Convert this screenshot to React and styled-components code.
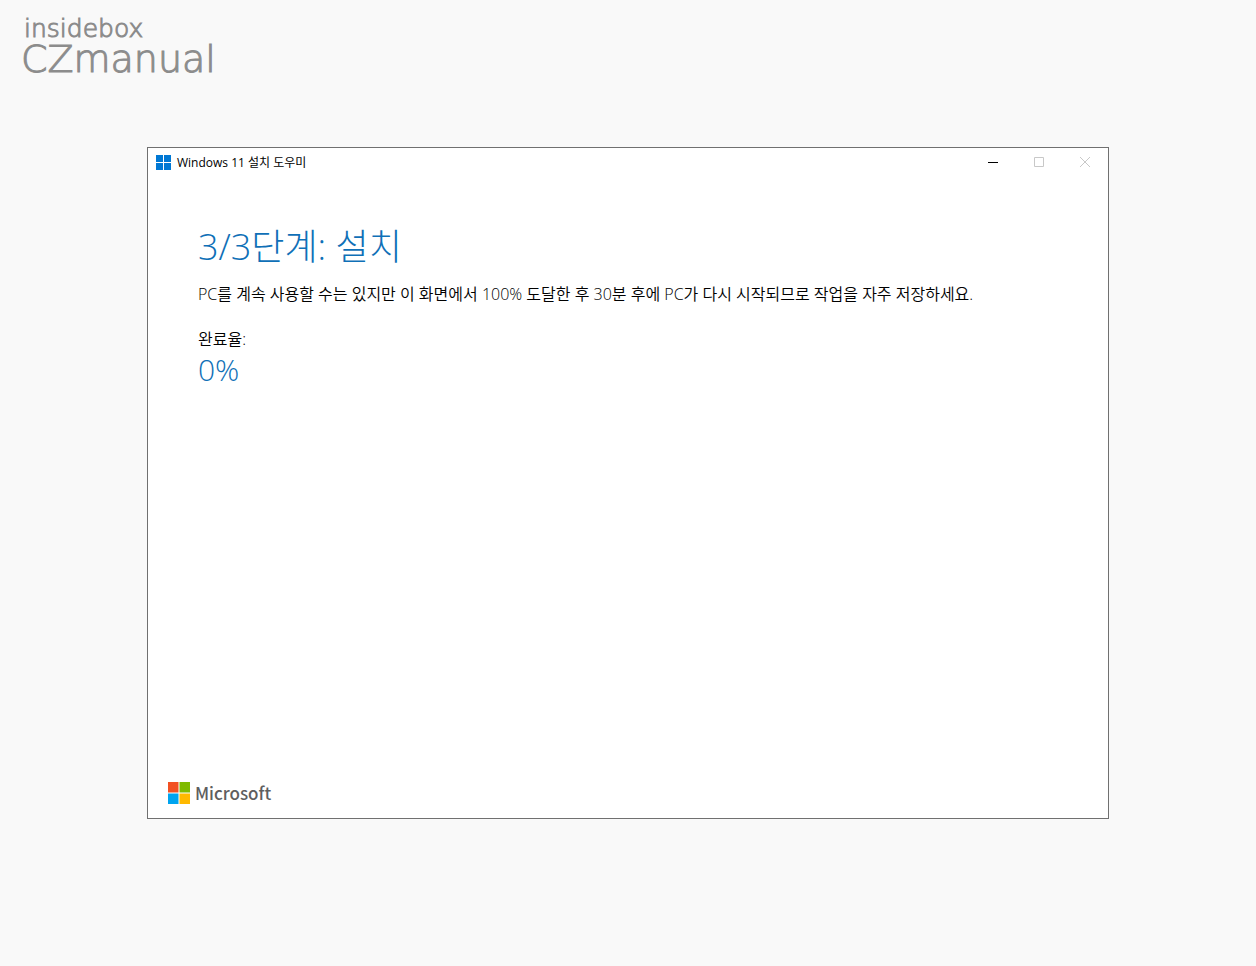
import React from "react";
import styled, { createGlobalStyle } from "styled-components";

const GlobalStyle = createGlobalStyle`
  * { box-sizing: border-box; }
  body {
    margin: 0;
    background: #f9f9f9;
    color: #000;
    font-family: "Open Sans", "Noto Sans CJK KR", sans-serif;
  }
`;

const Page = styled.div`
  min-height: 100vh;
  padding: 16px 24px 48px;
`;

const Brand = styled.header`
  display: flex;
  flex-direction: column;
  height: 64px;
  color: #8c8c8c;
  font-family: "DejaVu Sans", sans-serif;
  font-weight: 200;
  -webkit-text-stroke: 1px #8c8c8c;
`;

const BrandTop = styled.span`
  font-size: 25px;
  line-height: 25px;
`;

const BrandName = styled.span`
  font-size: 38px;
  line-height: 36px;
  margin-left: -3px;
`;

const Window = styled.main`
  display: flex;
  flex-direction: column;
  max-width: 962px;
  min-height: 672px;
  margin: 67px auto 0;
  background: #fff;
  border: 1px solid #707070;
`;

const TitleBar = styled.div`
  display: flex;
  align-items: center;
  height: 29px;
  padding-left: 8px;
`;

const Title = styled.span`
  flex: 1;
  margin-left: 6px;
  font-size: 12px;
  line-height: 17px;
`;

const WindowButton = styled.button`
  display: flex;
  align-items: center;
  justify-content: center;
  width: 46px;
  height: 28px;
  padding: 0 0 1px;
  border: 0;
  background: transparent;
  color: ${(p) => (p.disabled ? "#c8c8c8" : "#000")};
`;

const Content = styled.section`
  flex: 1;
  padding: 46px 50px 24px;
`;

const Heading = styled.h1`
  margin: 0;
  color: #0f70b7;
  font-size: 36px;
  font-weight: 300;
  line-height: 48px;
`;

const Text = styled.p`
  display: block;
  margin: 0;
  padding-top: ${(p) => p.$space};
  font-size: 16px;
  font-weight: 350;
  line-height: 24px;
`;

const Percent = styled.output`
  display: block;
  color: #0f70b7;
  font-size: 30px;
  font-weight: 300;
  line-height: 38px;
`;

const Footer = styled.footer`
  display: flex;
  align-items: center;
  gap: 5px;
  padding: 0 20px 13px;
`;

const MicrosoftName = styled.span`
  color: #5e5e5e;
  font-family: "Noto Sans CJK KR", sans-serif;
  font-size: 17px;
  font-weight: 500;
  line-height: 24px;
`;

const WindowsLogo = () => (
  <svg width="15" height="15" viewBox="0 0 15 15" fill="#0078d4" aria-hidden="true">
    <path d="M0 0h7v7H0zM8 0h7v7H8zM0 8h7v7H0zM8 8h7v7H8z" />
  </svg>
);

const MicrosoftLogo = () => (
  <svg width="22" height="22" viewBox="0 0 22 22" aria-hidden="true">
    <path fill="#f25022" d="M0 0h10.5v10.5H0z" />
    <path fill="#7fba00" d="M11.5 0H22v10.5H11.5z" />
    <path fill="#00a4ef" d="M0 11.5h10.5V22H0z" />
    <path fill="#ffb900" d="M11.5 11.5H22V22H11.5z" />
  </svg>
);

const ControlIcon = ({ d }) => (
  <svg width="10" height="10" viewBox="0 0 10 10" fill="none" stroke="currentColor" aria-hidden="true">
    <path d={d} />
  </svg>
);

export default function App() {
  return (
    <>
      <GlobalStyle />
      <Page>
        <Brand>
          <BrandTop>insidebox</BrandTop>
          <BrandName>CZmanual</BrandName>
        </Brand>
        <Window>
          <TitleBar>
            <WindowsLogo />
            <Title>Windows 11 설치 도우미</Title>
            <WindowButton aria-label="최소화">
              <ControlIcon d="M0 5.5H10" />
            </WindowButton>
            <WindowButton aria-label="최대화" disabled>
              <ControlIcon d="M.5 .5h9v9h-9z" />
            </WindowButton>
            <WindowButton aria-label="닫기" disabled>
              <ControlIcon d="M0 0L10 10M10 0L0 10" />
            </WindowButton>
          </TitleBar>
          <Content>
            <Heading>3/3단계: 설치</Heading>
            <Text $space="11px">
              PC를 계속 사용할 수는 있지만 이 화면에서 100% 도달한 후 30분 후에 PC가 다시 시작되므로 작업을 자주 저장하세요.
            </Text>
            <Text as="label" htmlFor="progress" $space="21px">완료율:</Text>
            <Percent id="progress">0%</Percent>
          </Content>
          <Footer>
            <MicrosoftLogo />
            <MicrosoftName>Microsoft</MicrosoftName>
          </Footer>
        </Window>
      </Page>
    </>
  );
}
